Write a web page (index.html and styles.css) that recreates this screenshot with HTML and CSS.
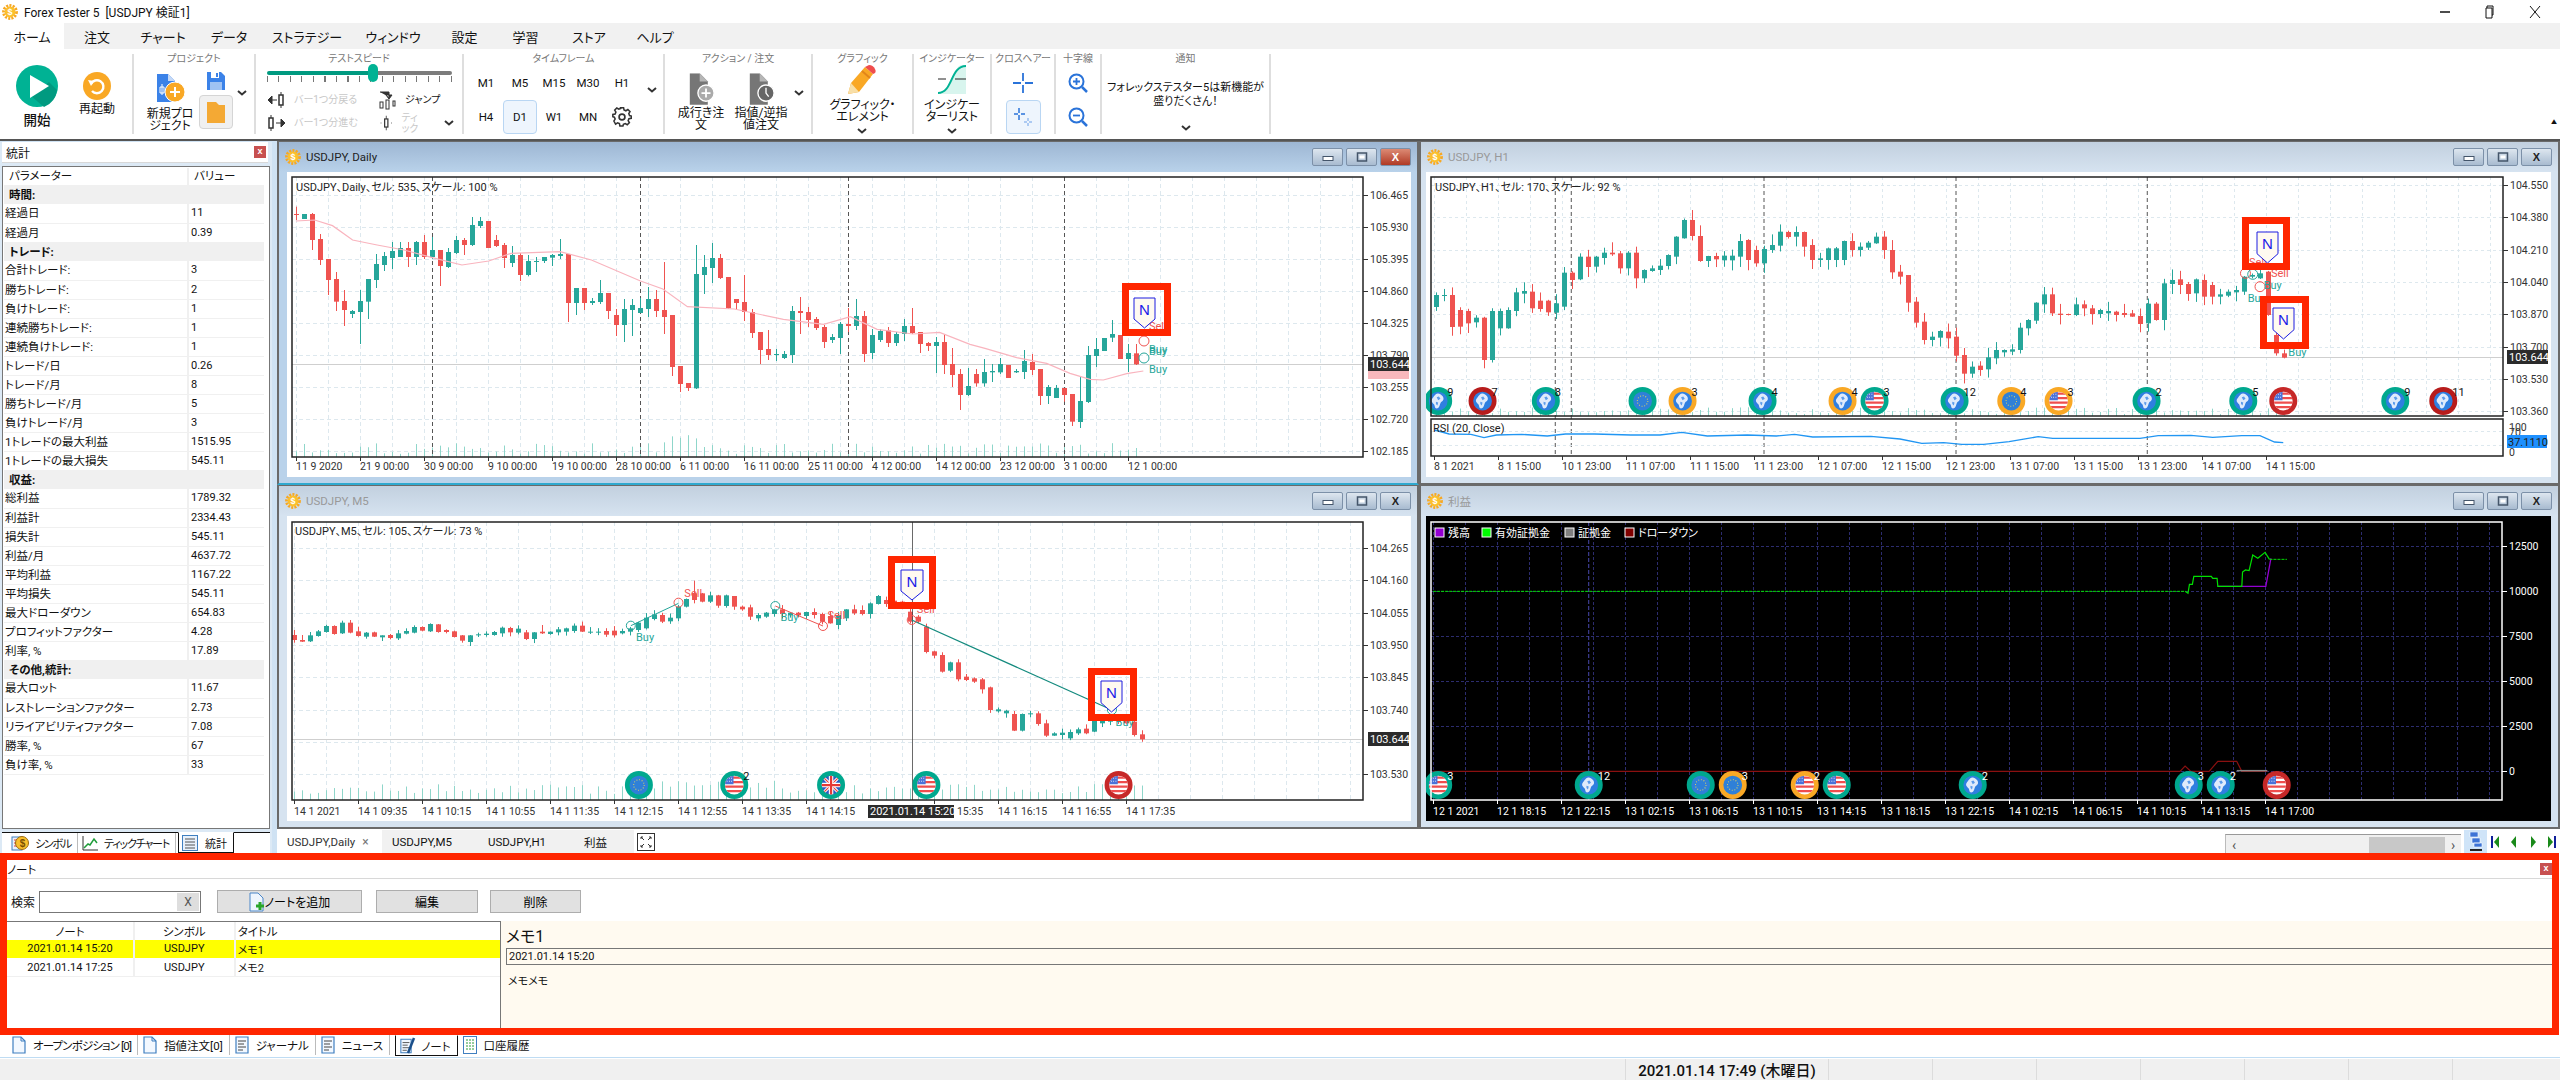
FILE: index.html
```html
<!DOCTYPE html>
<html lang="ja">
  <head>
    <meta charset="UTF-8" />
    <title>Forex Tester 5 [USDJPY 検証1]</title>
    <link rel="stylesheet" href="styles.css">
  </head>
  <body>
    <!-- shared icons -->
    <svg class="svg-defs" aria-hidden="true">
      <defs>
        <clipPath id="flagClip"><circle cx="14" cy="14" r="12.5" /></clipPath>
      </defs>
      <symbol id="sun" viewBox="0 0 16 16">
        <circle cx="8" cy="8" r="6.4" fill="none" stroke="#f7a823" stroke-width="3" stroke-dasharray="2 1.2" />
        <circle cx="8" cy="8" r="5.4" fill="#fbc02d" />
      </symbol>
      <symbol id="chev" viewBox="0 0 10 6">
        <path d="M1 1l4 3.4L9 1" fill="none" stroke="#333" stroke-width="2" />
      </symbol>
      <symbol id="wmin" viewBox="0 0 12 8">
        <rect x="1" y="3.500" width="10" height="4" fill="#fff" stroke="#44556a" />
      </symbol>
      <symbol id="wmax" viewBox="0 0 12 10">
        <rect x="1.500" y="1" width="9" height="8" fill="none" stroke="#44556a" stroke-width="1.500" />
        <rect x="3.500" y="3.500" width="5" height="3" fill="#fff" />
      </symbol>
      <symbol id="page" viewBox="0 0 14 18">
        <path d="M1 1h8l4 4v12H1z" fill="#f2f8ff" stroke="#3f7fc0" stroke-width="1.2" />
        <path d="M9 1v4h4" fill="none" stroke="#3f7fc0" />
      </symbol>
      <symbol id="lines" viewBox="0 0 14 18">
        <path d="M1 1h12v16H1z" fill="#f2f8ff" stroke="#3f7fc0" stroke-width="1.2" />
        <path d="M3 5h8M3 8h6M3 11h8M3 14h5" stroke="#444" />
      </symbol>
      <symbol id="grayDoc" viewBox="0 0 30 36">
        <path d="M2 0h11l9 9v26H2z" fill="#767676" />
        <path d="M13 0l9 9h-9z" fill="#b5b5b5" />
      </symbol>
      <symbol id="flag-usa" viewBox="0 0 28 28">
        <g clip-path="url(#flagClip)">
          <rect width="28" height="28" fill="#fff" />
          <path d="M0 4h28M0 10h28M0 16h28M0 22h28" stroke="#ef4d4d" stroke-width="3" />
          <rect width="13" height="13" fill="#4a72d9" />
          <path d="M4 5h1M7 5h1M10 5h1M4 9h1M7 9h1M10 9h1" stroke="#fff" stroke-width="1.4" />
        </g>
      </symbol>
      <symbol id="flag-eu" viewBox="0 0 28 28">
        <g clip-path="url(#flagClip)">
          <rect width="28" height="28" fill="#2f80d8" />
          <circle cx="14" cy="14" r="7" fill="none" stroke="#e7d55a" stroke-width="1.4" stroke-dasharray="1.2 2.4" />
        </g>
      </symbol>
      <symbol id="flag-uk" viewBox="0 0 28 28">
        <g clip-path="url(#flagClip)">
          <rect width="28" height="28" fill="#2c5cc5" />
          <path d="M0 0l28 28M28 0L0 28" stroke="#fff" stroke-width="4" />
          <path d="M0 0l28 28M28 0L0 28" stroke="#e53935" stroke-width="1.5" />
          <path d="M14 0v28M0 14h28" stroke="#fff" stroke-width="6" />
          <path d="M14 0v28M0 14h28" stroke="#e53935" stroke-width="3" />
        </g>
      </symbol>
      <symbol id="flag-globe" viewBox="0 0 28 28">
        <g clip-path="url(#flagClip)">
          <rect width="28" height="28" fill="#2f7fe0" />
          <path d="M14 4c4 1 8 4 7 8-1 3-3 2-4 5s-2 7-5 7-2-4-4-6-4-4-2-7 5-8 8-7z" fill="#dfeafb" />
          <path d="M12 9l3-1 2 3-3 2zM11 15l3 1-1 4-2-2z" fill="#5c9bea" />
        </g>
      </symbol>
    </svg>

    <div class="app">
      <header class="titlebar">
        <svg class="sun-icon" viewBox="0 0 16 16"><use href="#sun" /><text x="8" y="11.400" text-anchor="middle" class="sun-text">$</text></svg>
        <span class="app-title">Forex Tester 5&nbsp; [USDJPY 検証1]</span>
        <div class="win-controls">
          <svg width="12" height="12" viewBox="0 0 12 12"><path d="M1 6h10" stroke="#111" stroke-width="1.5" /></svg>
          <svg width="12" height="14" viewBox="0 0 12 14"><path d="M3 3V1h6v9H8M2 3h6v10H2z" fill="none" stroke="#111" /></svg>
          <svg width="12" height="14" viewBox="0 0 12 14"><path d="M1 1l10 12M11 1L1 13" stroke="#111" /></svg>
        </div>
      </header>

      <nav class="ribbon-tabs">
        <span class="rtab active">ホーム</span>
        <span class="rtab">注文</span>
        <span class="rtab">チャート</span>
        <span class="rtab">データ</span>
        <span class="rtab">ストラテジー</span>
        <span class="rtab">ウィンドウ</span>
        <span class="rtab">設定</span>
        <span class="rtab">学習</span>
        <span class="rtab">ストア</span>
        <span class="rtab">ヘルプ</span>
      </nav>

      <div class="ribbon">
        <section class="rgroup g-run">
          <div class="big-btn start-btn">
            <svg width="42" height="42" viewBox="0 0 42 42">
              <circle cx="21" cy="21" r="21" fill="#00b294" />
              <path d="M15 31l13 11a21 21 0 0 0 13-17l-8-8z" fill="#009a80" />
              <path d="M14 10l19 11-19 12z" fill="#fff" />
            </svg>
            <span class="start-label">開始</span>
          </div>
          <div class="big-btn restart-btn">
            <svg width="28" height="28" viewBox="0 0 28 28">
              <circle cx="14" cy="14" r="14" fill="#f9a825" />
              <path d="M8 12a6.500 6.500 0 1 1 1 7" fill="none" stroke="#fff" stroke-width="2.400" />
              <path d="M5 8l6 1-3 5z" fill="#fff" />
            </svg>
            <span>再起動</span>
          </div>
        </section>

        <section class="rgroup g-project">
          <h4 class="rtitle">プロジェクト</h4>
          <div class="rbody">
            <div class="big-btn project-btn">
              <svg width="30" height="30" viewBox="0 0 30 30">
                <path d="M2 0h11l7 7v21H2z" fill="#3b82e8" />
                <path d="M13 0l7 7h-7z" fill="#c5d9f7" />
                <path d="M7 10v11M5 13h4v6H5z" stroke="#fff" fill="none" />
                <circle cx="20" cy="18" r="10" fill="#f9a825" stroke="#fff" />
                <path d="M20 13v10M15 18h10" stroke="#fff" stroke-width="2" />
              </svg>
              <span class="two-line">新規プロ<br>ジェクト</span>
            </div>
            <div class="project-side">
              <svg width="18" height="18" viewBox="0 0 18 18">
                <path d="M0 0h14l4 4v14H0z" fill="#3b82e8" />
                <path d="M4 0h8v6H4z" fill="#fff" />
                <path d="M9 1h2v4H9z" fill="#3b82e8" />
                <path d="M3 10h12v8H3z" fill="#9fc2f3" />
              </svg>
              <div class="folder-btn">
                <svg width="18" height="22" viewBox="0 0 18 22"><path d="M0 1h9l3 3h6v18H0z" fill="#f4a934" /></svg>
              </div>
            </div>
            <svg class="chev chev-project"><use href="#chev" /></svg>
          </div>
        </section>

        <section class="rgroup g-speed">
          <h4 class="rtitle">テストスピード</h4>
          <div class="slider">
            <div class="slider-fill"></div>
            <div class="slider-thumb"></div>
            <div class="slider-ticks"></div>
          </div>
          <div class="speed-rows">
            <div class="speed-item muted">
              <svg width="18" height="18" viewBox="0 0 18 18"><path d="M0 9h9M0 9l4-4v8z" stroke="#333" fill="#333" /><path d="M13 1v16" stroke="#333" /><rect x="11" y="4" width="4" height="10" fill="#fff" stroke="#333" stroke-width="1.500" /></svg>
              <span>バー1つ分戻る</span>
            </div>
            <div class="speed-item">
              <svg width="18" height="20" viewBox="0 0 18 20"><path d="M1 2h9v5M7 5l3 4 3-4z" stroke="#333" fill="#333" /><rect x="1" y="12" width="3" height="6" fill="#fff" stroke="#333" /><rect x="7" y="10" width="3" height="9" fill="#fff" stroke="#333" /><rect x="14" y="11" width="2" height="5" fill="#fff" stroke="#333" /></svg>
              <span>ジャンプ</span>
            </div>
            <div class="speed-item muted">
              <svg width="18" height="18" viewBox="0 0 18 18"><path d="M3 1v16" stroke="#333" /><rect x="1" y="4" width="4" height="10" fill="#fff" stroke="#333" stroke-width="1.500" /><path d="M8 9h9M17 9l-4-4v8z" stroke="#333" fill="#333" /></svg>
              <span>バー1つ分進む</span>
            </div>
            <div class="speed-item muted tick-item">
              <svg width="18" height="18" viewBox="0 0 18 18"><path d="M9 0v18" stroke="#333" /><rect x="7" y="4" width="4" height="10" fill="#fff" stroke="#333" stroke-width="1.500" /><path d="M2 9h1M15 9h1" stroke="#333" /></svg>
              <span class="tick-label">ティ<br>ック</span>
              <svg class="chev"><use href="#chev" /></svg>
            </div>
          </div>
        </section>

        <section class="rgroup g-time">
          <h4 class="rtitle">タイムフレーム</h4>
          <div class="rbody">
            <div class="tf-grid">
              <span>M1</span><span>M5</span><span>M15</span><span>M30</span><span>H1</span>
              <span>H4</span><span class="selected">D1</span><span>W1</span><span>MN</span>
              <span>
                <svg width="20" height="20" viewBox="0 0 24 24"><path d="M10 2h4l.6 3 2.400 1 2.600-1.600 2.800 2.800L20.800 9.800l1 2.400 2.200.6v3l-3 .6-1 2.400 1.600 2.600-2.800 2.800-2.600-1.600-2.400 1-.6 2.200h-4l-.6-3-2.400-1-2.600 1.600L1.400 19.400 3 16.800l-1-2.400L0 13.800v-3l3-.6 1-2.400L2.400 5.200 5.200 2.400 7.800 4l2.400-1z" transform="translate(1 -1) scale(.92)" fill="none" stroke="#333" stroke-width="2" /><circle cx="12" cy="12" r="3.500" fill="none" stroke="#333" stroke-width="2" /></svg>
              </span>
            </div>
            <svg class="chev chev-time"><use href="#chev" /></svg>
          </div>
        </section>

        <section class="rgroup g-action">
          <h4 class="rtitle">アクション / 注文</h4>
          <div class="rbody">
            <div class="big-btn order-btn">
              <span class="order-icon">
                <svg width="30" height="36" viewBox="0 0 30 36">
                  <use href="#grayDoc" width="30" height="36" />
                  <circle cx="20" cy="22" r="9" fill="#aaa" stroke="#fff" stroke-width="1.500" />
                  <path d="M20 17v10M15 22h10" stroke="#fff" stroke-width="2" />
                </svg>
              </span>
              <span class="two-line">成行き注<br>文</span>
            </div>
            <div class="big-btn order-btn">
              <span class="order-icon">
                <svg width="30" height="36" viewBox="0 0 30 36">
                  <use href="#grayDoc" width="30" height="36" />
                  <circle cx="20" cy="22" r="9" fill="#666" stroke="#fff" stroke-width="1.500" />
                  <path d="M20 16v6l3 4" stroke="#fff" stroke-width="1.500" fill="none" />
                </svg>
              </span>
              <span class="two-line">指値/逆指<br>値注文</span>
            </div>
            <svg class="chev chev-action"><use href="#chev" /></svg>
          </div>
        </section>

        <section class="rgroup g-graphic">
          <h4 class="rtitle">グラフィック</h4>
          <div class="big-btn wide-btn">
            <svg width="30" height="29" viewBox="0 0 30 29">
              <path d="M18 2l8 7-14 18-11 2 3-11z" fill="#f9a825" />
              <path d="M4 18l8 9-11 2z" fill="#f8dfa8" />
              <path d="M18 2l4-2q4 0 6 4t-2 5z" fill="#ef4d4d" />
              <path d="M15 6l8 7" stroke="#e2851a" stroke-width="2" />
            </svg>
            <span class="two-line">グラフィック・<br>エレメント</span>
            <svg class="chev"><use href="#chev" /></svg>
          </div>
        </section>

        <section class="rgroup g-indicator">
          <h4 class="rtitle">インジケーター</h4>
          <div class="big-btn wide-btn">
            <svg width="28" height="29" viewBox="0 0 28 29">
              <path d="M0 14v15h28V0h-4C14 0 16 29 0 29z" fill="#d8f5ee" />
              <path d="M0 28C15 28 12 1 28 1" fill="none" stroke="#00b294" stroke-width="2" />
              <path d="M0 14h8M17 14h11" stroke="#222" />
            </svg>
            <span class="two-line">インジケー<br>ターリスト</span>
            <svg class="chev"><use href="#chev" /></svg>
          </div>
        </section>

        <section class="rgroup g-cross">
          <h4 class="rtitle">クロスヘアー</h4>
          <div class="icon-stack">
            <span class="icon-cell">
              <svg width="20" height="20" viewBox="0 0 20 20"><path d="M10 0v8M10 12v8M0 10h8M12 10h8" stroke="#2a73d9" stroke-width="1.800" /></svg>
            </span>
            <span class="icon-cell selected">
              <svg width="20" height="20" viewBox="0 0 20 20"><path d="M6 1v5M6 8v5M1 7h4M8 7h4" stroke="#2a73d9" stroke-width="1.500" /><path d="M15 11v3M15 16v3M11 15h3M16 15h3" stroke="#6a9fe8" /></svg>
            </span>
          </div>
        </section>

        <section class="rgroup g-zoom">
          <h4 class="rtitle">十字線</h4>
          <div class="icon-stack">
            <span class="icon-cell">
              <svg width="20" height="20" viewBox="0 0 20 20"><circle cx="8.500" cy="8.500" r="7" fill="none" stroke="#2a73d9" stroke-width="2" /><path d="M14 14l5 5" stroke="#2a73d9" stroke-width="2.500" /><path d="M8.500 5v7M5 8.500h7" stroke="#2a73d9" stroke-width="1.800" /></svg>
            </span>
            <span class="icon-cell">
              <svg width="20" height="20" viewBox="0 0 20 20"><circle cx="8.500" cy="8.500" r="7" fill="none" stroke="#2a73d9" stroke-width="2" /><path d="M14 14l5 5" stroke="#2a73d9" stroke-width="2.500" /><path d="M5 8.500h7" stroke="#2a73d9" stroke-width="1.800" /></svg>
            </span>
          </div>
        </section>

        <section class="rgroup g-notify">
          <h4 class="rtitle">通知</h4>
          <p class="notify-text">フォレックステスター5は新機能が<br>盛りだくさん！</p>
          <svg class="chev"><use href="#chev" /></svg>
        </section>

        <span class="ribbon-collapse">&#9650;</span>
      </div>

      <div class="workspace">
        <aside class="side">
          <div class="side-head">
            <span>統計</span>
            <span class="close-x">x</span>
          </div>
          <div class="stats-frame">
            <table class="stats">
              <colgroup><col class="stats-name"><col></colgroup>
              <thead><tr><th>パラメーター</th><th>バリュー</th></tr></thead>
              <tbody>
                <tr class="sec"><td>時間:</td><td></td></tr>
                <tr><td>経過日</td><td>11</td></tr>
                <tr><td>経過月</td><td>0.39</td></tr>
                <tr class="sec"><td>トレード:</td><td></td></tr>
                <tr><td>合計トレード:</td><td>3</td></tr>
                <tr><td>勝ちトレード:</td><td>2</td></tr>
                <tr><td>負けトレード:</td><td>1</td></tr>
                <tr><td>連続勝ちトレード:</td><td>1</td></tr>
                <tr><td>連続負けトレード:</td><td>1</td></tr>
                <tr><td>トレード/日</td><td>0.26</td></tr>
                <tr><td>トレード/月</td><td>8</td></tr>
                <tr><td>勝ちトレード/月</td><td>5</td></tr>
                <tr><td>負けトレード/月</td><td>3</td></tr>
                <tr><td>1トレードの最大利益</td><td>1515.95</td></tr>
                <tr><td>1トレードの最大損失</td><td>545.11</td></tr>
                <tr class="sec"><td>収益:</td><td></td></tr>
                <tr><td>総利益</td><td>1789.32</td></tr>
                <tr><td>利益計</td><td>2334.43</td></tr>
                <tr><td>損失計</td><td>545.11</td></tr>
                <tr><td>利益/月</td><td>4637.72</td></tr>
                <tr><td>平均利益</td><td>1167.22</td></tr>
                <tr><td>平均損失</td><td>545.11</td></tr>
                <tr><td>最大ドローダウン</td><td>654.83</td></tr>
                <tr><td>プロフィットファクター</td><td>4.28</td></tr>
                <tr><td>利率, %</td><td>17.89</td></tr>
                <tr class="sec"><td>その他,統計:</td><td></td></tr>
                <tr><td>最大ロット</td><td>11.67</td></tr>
                <tr><td>レストレーションファクター</td><td>2.73</td></tr>
                <tr><td>リライアビリティファクター</td><td>7.08</td></tr>
                <tr><td>勝率, %</td><td>67</td></tr>
                <tr><td>負け率, %</td><td>33</td></tr>
              </tbody>
            </table>
          </div>
          <div class="side-tabs">
            <span class="stab">
              <svg width="18" height="17" viewBox="0 0 18 17"><rect x="1" y="2" width="10" height="13" fill="#eaf2fb" stroke="#3f7fc0" /><path d="M3 5h5M3 8h5M3 11h5" stroke="#e53935" /><circle cx="11" cy="8" r="6.500" fill="#f9c02d" stroke="#9a6a10" /><text x="11" y="12" text-anchor="middle" class="dollar">$</text></svg>
              シンボル
            </span>
            <span class="stab">
              <svg width="16" height="16" viewBox="0 0 16 16"><path d="M1 1v14h15" fill="none" stroke="#333" /><path d="M2 13l4-4 2 1 4-6 3 4" fill="none" stroke="#1f9d3a" stroke-width="1.500" /></svg>
              ティックチャート
            </span>
            <span class="stab active">
              <svg width="16" height="16" viewBox="0 0 16 16"><rect x=".5" y=".5" width="15" height="15" fill="#e8f1fb" stroke="#3f7fc0" /><path d="M3 4h10M3 7h10M3 10h10M3 13h10" stroke="#555" /></svg>
              統計
            </span>
          </div>
        </aside>

        <main class="main">
          <div class="mdi">
            <article class="window active">
              <div class="window-title">
                <svg class="sun-icon" viewBox="0 0 16 16"><use href="#sun" /><text x="8" y="11.400" text-anchor="middle" class="sun-text">$</text></svg>
                <span>USDJPY, Daily</span>
                <div class="window-btns">
                  <span class="wbtn"><svg width="12" height="8"><use href="#wmin" /></svg></span>
                  <span class="wbtn"><svg width="12" height="10"><use href="#wmax" /></svg></span>
                  <span class="wbtn wclose">X</span>
                </div>
              </div>
              <div class="window-body"><svg class="chart" id="chartDaily"></svg></div>
            </article>
            <article class="window">
              <div class="window-title">
                <svg class="sun-icon" viewBox="0 0 16 16"><use href="#sun" /><text x="8" y="11.400" text-anchor="middle" class="sun-text">$</text></svg>
                <span>USDJPY, H1</span>
                <div class="window-btns">
                  <span class="wbtn"><svg width="12" height="8"><use href="#wmin" /></svg></span>
                  <span class="wbtn"><svg width="12" height="10"><use href="#wmax" /></svg></span>
                  <span class="wbtn">X</span>
                </div>
              </div>
              <div class="window-body"><svg class="chart" id="chartH1"></svg></div>
            </article>
            <article class="window">
              <div class="window-title">
                <svg class="sun-icon" viewBox="0 0 16 16"><use href="#sun" /><text x="8" y="11.400" text-anchor="middle" class="sun-text">$</text></svg>
                <span>USDJPY, M5</span>
                <div class="window-btns">
                  <span class="wbtn"><svg width="12" height="8"><use href="#wmin" /></svg></span>
                  <span class="wbtn"><svg width="12" height="10"><use href="#wmax" /></svg></span>
                  <span class="wbtn">X</span>
                </div>
              </div>
              <div class="window-body"><svg class="chart" id="chartM5"></svg></div>
            </article>
            <article class="window">
              <div class="window-title">
                <svg class="sun-icon" viewBox="0 0 16 16"><use href="#sun" /><text x="8" y="11.400" text-anchor="middle" class="sun-text">$</text></svg>
                <span>利益</span>
                <div class="window-btns">
                  <span class="wbtn"><svg width="12" height="8"><use href="#wmin" /></svg></span>
                  <span class="wbtn"><svg width="12" height="10"><use href="#wmax" /></svg></span>
                  <span class="wbtn">X</span>
                </div>
              </div>
              <div class="window-body dark"><svg class="chart" id="chartEquity"></svg></div>
            </article>
          </div>

          <div class="doc-tabs">
            <span class="dtab active">USDJPY,Daily <i>×</i></span>
            <span class="dtab">USDJPY,M5</span>
            <span class="dtab">USDJPY,H1</span>
            <span class="dtab dtab-last">利益</span>
            <span class="fullscreen">
              <svg width="18" height="18" viewBox="0 0 18 18"><rect x=".5" y=".5" width="17" height="17" fill="#fff" stroke="#333" /><path d="M4 4l3 3M4 4v2M4 4h2M14 4l-3 3M14 4v2M14 4h-2M4 14l3-3M4 14v-2M4 14h2M14 14l-3-3M14 14v-2M14 14h-2" stroke="#333" /></svg>
            </span>
            <div class="doc-scroll">
              <span class="scroll-arrow">&#8249;</span>
              <span class="scroll-track"><span class="scroll-thumb"></span></span>
              <span class="scroll-arrow">&#8250;</span>
            </div>
            <span class="stack-btn">
              <svg width="14" height="20" viewBox="0 0 14 20"><path d="M1 0h8v5H1zM3 6h8v5H3zM5 11h8v4H5z" fill="#3d74d6" stroke="#fff" stroke-width=".6" /><path d="M1 17h12v2H1z" fill="#222" /></svg>
            </span>
            <span class="nav-arrows">
              <svg width="66" height="14" viewBox="0 0 66 14">
                <path d="M1 1v12" stroke="#10209a" stroke-width="2" /><path d="M8 1L3 7l5 6z" fill="#1a8a1a" />
                <path d="M25 1l-5 6 5 6z" fill="#1a8a1a" />
                <path d="M40 1l5 6-5 6z" fill="#1a8a1a" />
                <path d="M57 1l5 6-5 6z" fill="#1a8a1a" /><path d="M64 1v12" stroke="#10209a" stroke-width="2" />
              </svg>
            </span>
          </div>
        </main>
      </div>

      <section class="note-panel">
        <div class="note-head">
          <span>ノート</span>
          <span class="close-x small">x</span>
        </div>
        <div class="note-tools">
          <label class="search-label">検索</label>
          <div class="search-box"><span class="search-clear">X</span></div>
          <button class="tool-btn add-btn">
            <svg width="16" height="20" viewBox="0 0 16 20"><path d="M1 1h8l5 5v13H1z" fill="#eef5fd" stroke="#4a86c8" /><path d="M11 10v8M7 14h8" stroke="#2aa52a" stroke-width="3" /></svg>
            ノートを追加
          </button>
          <button class="tool-btn edit-btn">編集</button>
          <button class="tool-btn del-btn">削除</button>
        </div>
        <div class="note-body">
          <table class="note-list">
            <colgroup><col class="c1"><col class="c2"><col></colgroup>
            <thead><tr><th>ノート</th><th>シンボル</th><th class="left">タイトル</th></tr></thead>
            <tbody>
              <tr class="picked"><td>2021.01.14 15:20</td><td>USDJPY</td><td class="left">メモ1</td></tr>
              <tr><td>2021.01.14 17:25</td><td>USDJPY</td><td class="left">メモ2</td></tr>
            </tbody>
          </table>
          <div class="note-view">
            <h3 class="note-title">メモ1</h3>
            <div class="note-date">2021.01.14 15:20</div>
            <p class="note-text">メモメモ</p>
          </div>
        </div>
      </section>

      <div class="bottom-tabs">
        <span class="btab tight"><svg width="14" height="18"><use href="#page" /></svg>オープンポジション [0]</span>
        <span class="btab"><svg width="14" height="18"><use href="#page" /></svg>指値注文[0]</span>
        <span class="btab"><svg width="14" height="18"><use href="#lines" /></svg>ジャーナル</span>
        <span class="btab"><svg width="14" height="18"><use href="#lines" /></svg>ニュース</span>
        <span class="btab active"><svg width="16" height="18" viewBox="0 0 16 18"><use href="#lines" width="12" height="18" /><path d="M14 1L8 16" stroke="#1b4f8a" stroke-width="2.500" /></svg>ノート</span>
        <span class="btab last"><svg width="14" height="18" viewBox="0 0 14 18"><rect x=".5" y=".5" width="13" height="17" fill="#fff" stroke="#3f7fc0" /><path d="M3 4h8M3 7h8M3 10h8M3 13h8" stroke="#2a9d3a" stroke-dasharray="2 1" /></svg>口座履歴</span>
      </div>

      <footer class="statusbar">
        <span class="status-date">2021.01.14 17:49 (木曜日)</span>
        <span class="status-cell"></span>
        <span class="status-cell"></span>
        <span class="status-cell"></span>
        <span class="status-cell"></span>
        <span class="status-cell"></span>
        <span class="status-cell"></span>
      </footer>
    </div>

    <script src="chart.js"></script>
  </body>
</html>
```

FILE: styles.css
```css
* {
  box-sizing: border-box;
}

body {
  margin: 0;
  background: #fff;
  color: #111;
  font-family: Roboto, "Noto Sans CJK JP", sans-serif;
  font-size: 12px;
  font-feature-settings: "palt";
}

.svg-defs {
  position: absolute;
  width: 0;
  height: 0;
}

.sun-text {
  font: bold 9px "Liberation Sans", sans-serif;
  fill: #fff;
}

.dollar {
  font: bold 10px "Liberation Sans", sans-serif;
  fill: #7a4f00;
}

.app {
  width: 2560px;
  height: 1080px;
  display: flex;
  flex-direction: column;
  overflow: hidden;
}

/* title bar */
.titlebar {
  height: 23px;
  display: flex;
  align-items: center;
  padding-left: 2px;
  flex: none;
}

.sun-icon {
  width: 16px;
  height: 16px;
  flex: none;
}

.app-title {
  margin-left: 6px;
  font-size: 12px;
}

.win-controls {
  margin-left: auto;
  display: flex;
  align-items: center;
  gap: 33px;
  padding-right: 19px;
}

/* ribbon */
.ribbon-tabs {
  height: 26px;
  flex: none;
  background: #f1f1f1;
  display: flex;
  align-items: center;
  font-size: 13px;
}

.rtab {
  height: 100%;
  display: flex;
  align-items: center;
  justify-content: center;
  width: 66px;
}

.rtab.active {
  background: #fff;
  width: 64px;
}

.rtab:nth-child(5) {
  width: 90px;
}

.rtab:nth-child(6) {
  width: 82px;
}

.rtab:nth-child(7),
.rtab:nth-child(8) {
  width: 61px;
}

.ribbon {
  height: 92px;
  flex: none;
  display: flex;
  padding-top: 5px;
  border-bottom: 2px solid #555;
  position: relative;
  font-size: 12px;
  line-height: 12px;
}

.rgroup {
  height: 80px;
  border-right: 2px solid #dedede;
  display: flex;
  flex-direction: column;
  align-items: center;
  flex: none;
}

.rtitle {
  margin: 0;
  height: 14px;
  font-size: 10px;
  line-height: 10px;
  font-weight: 400;
  color: #777;
  text-align: center;
  width: 100%;
  white-space: nowrap;
}

.rbody {
  display: flex;
  width: 100%;
  flex: 1;
}

.big-btn {
  display: flex;
  flex-direction: column;
  align-items: center;
}

.two-line {
  display: block;
  text-align: center;
  line-height: 12px;
  white-space: nowrap;
}

.chev {
  width: 10px;
  height: 6px;
  flex: none;
}

.g-run {
  width: 134px;
  flex-direction: row;
  align-items: flex-start;
}

.start-btn {
  margin: 11px 0 0 16px;
  width: 42px;
}

.start-label {
  margin-top: 7px;
  font-size: 13.5px;
  font-weight: 500;
}

.restart-btn {
  margin: 18px 0 0 21px;
  width: 36px;
}

.restart-btn span {
  margin-top: 3px;
  white-space: nowrap;
}

.g-project {
  width: 122px;
}

.project-btn {
  width: 46px;
  margin: 6px 0 0 13px;
}

.project-btn span {
  margin-top: 4px;
}

.project-side {
  margin: 4px 0 0 6px;
  display: flex;
  flex-direction: column;
  align-items: center;
  gap: 5px;
  width: 34px;
}

.folder-btn {
  width: 34px;
  height: 34px;
  background: #f0f0f0;
  border: 1px solid #d5d5d5;
  border-radius: 4px;
  display: flex;
  align-items: center;
  justify-content: center;
}

.chev-project {
  margin: 22px 0 0 4px;
}

.g-speed {
  width: 208px;
  align-items: flex-start;
}

.g-speed .rtitle {
  margin-bottom: 1px;
}

.slider {
  width: 185px;
  margin-left: 11px;
  height: 12px;
  position: relative;
}

.slider-fill {
  height: 4px;
  margin-top: 3px;
  background: linear-gradient(90deg, #009a80 0 57%, #7c7c7c 57% 100%);
  border-radius: 2px;
}

.slider-thumb {
  position: absolute;
  left: 101px;
  top: -4px;
  width: 10px;
  height: 18px;
  border-radius: 5px;
  background: #00b294;
}

.slider-ticks {
  height: 6px;
  margin-top: 1px;
  background: repeating-linear-gradient(90deg, #777 0 1px, transparent 1px 11.5px);
}

.speed-rows {
  margin: 8px 0 0 12px;
  display: grid;
  grid-template-columns: 111px 75px;
  grid-auto-rows: 23px;
  align-items: center;
  font-size: 10px;
}

.speed-item {
  display: flex;
  align-items: center;
  gap: 8px;
}

.speed-item.muted {
  color: #c8c8c8;
}

.tick-label {
  line-height: 11px;
  width: 34px;
}

.tick-item .chev {
  margin-left: 7px;
}

.g-time {
  width: 201px;
}

.tf-grid {
  margin: 2px 0 0 5px;
  display: grid;
  grid-template-columns: repeat(5, 34px);
  grid-auto-rows: 34px;
  font-size: 11.5px;
}

.tf-grid span {
  display: flex;
  align-items: center;
  justify-content: center;
}

.selected {
  background: #eef5fd;
  border: 1px solid #b9d6f3;
  border-radius: 4px;
}

.chev-time {
  margin: 23px 0 0 8px;
}

.g-action {
  width: 148px;
}

.order-btn {
  width: 60px;
  margin-top: 5px;
}

.order-btn:first-child {
  margin-left: 6px;
}

.order-icon {
  height: 33px;
}

.order-icon svg {
  width: 27px;
  height: 33px;
}

.order-btn .two-line {
  margin-top: 1px;
}

.chev-action {
  margin: 22px 0 0 3px;
}

.g-graphic,
.g-indicator {
  width: 101px;
}

.g-indicator {
  width: 78px;
}

.wide-btn {
  margin-top: 1px;
}

.wide-btn .two-line {
  margin: 5px 0 5px;
}

.g-cross {
  width: 64px;
}

.g-zoom {
  width: 46px;
}

.icon-stack {
  display: flex;
  flex-direction: column;
  margin-top: 2px;
}

.icon-cell {
  width: 35px;
  height: 34px;
  display: flex;
  align-items: center;
  justify-content: center;
}

.g-notify {
  width: 169px;
}

.notify-text {
  margin: 13px 0 16px;
  font-size: 11px;
  line-height: 14px;
  text-align: center;
  white-space: nowrap;
}

.ribbon-collapse {
  position: absolute;
  right: 3px;
  bottom: 11px;
  font-size: 6px;
}

/* middle area */
.workspace {
  height: 712px;
  flex: none;
  display: flex;
  background: #cfe2f3;
}

.side {
  width: 272px;
  flex: none;
  display: flex;
  flex-direction: column;
  padding: 0 2px 0 2px;
  border-top: 1px solid #cfe2f3;
  background: #dce9f5;
}

.side-head {
  height: 21px;
  background: #fff;
  border-bottom: 1px solid #d8d8d8;
  display: flex;
  align-items: center;
  justify-content: space-between;
  padding: 0 2px 0 4px;
  font-size: 12px;
  margin-right: 2px;
}

.close-x {
  width: 12px;
  height: 12px;
  background: #c75050;
  color: #fff;
  font: bold 9px/11px "Liberation Sans", sans-serif;
  text-align: center;
}

.stats-frame {
  margin-top: 3px;
  height: 663px;
  flex: none;
  background: #fff;
  border: 1.5px solid #777;
  padding: 1px 5px 0 1px;
}

.stats {
  width: 100%;
  table-layout: fixed;
  border-collapse: collapse;
}

.stats-name {
  width: 184px;
}

.stats th {
  height: 17px;
  padding: 0 0 0 5px;
  font-weight: 400;
  font-size: 11.5px;
  line-height: 17px;
  text-align: left;
  border-left: 2px solid #f0f0f0;
}

.stats th:first-child {
  border-left: 0;
}

.stats td {
  height: 19px;
  padding: 0;
  border-bottom: 1.5px solid #f0f0f0;
  font-size: 11.5px;
  line-height: 16px;
  white-space: nowrap;
}

.stats td:first-child {
  padding-left: 1px;
  border-right: 2px solid #f0f0f0;
}

.stats td:last-child {
  padding-left: 2px;
  font-size: 11px;
}

.stats .sec td {
  background: #f0f0f0;
  border: 0;
  font-weight: 700;
}

.stats .sec td:first-child {
  padding-left: 5px;
}

.side-tabs {
  margin-top: 3px;
  height: 21px;
  display: flex;
  background: #fff;
  border-top: 1px solid #111;
  font-size: 11px;
  padding-left: 9px;
}

.stab {
  display: flex;
  align-items: center;
  gap: 6px;
  padding-right: 6px;
  margin-right: 4px;
  border-right: 1px solid #bbb;
  white-space: nowrap;
  letter-spacing: -1.2px;
}

.stab.active {
  margin: -1px 0 0 -2px;
  padding: 0 6px 0 3px;
  border: 1px solid #111;
  border-top-color: #fff;
  gap: 7px;
  letter-spacing: 0;
}

.side::after {
  content: "";
  display: block;
  flex: 1;
  background: #fff;
}

.main {
  flex: 1;
  min-width: 0;
  margin-left: 5px;
  display: flex;
  flex-direction: column;
  background: #fff;
}

.mdi {
  height: 688px;
  flex: none;
  display: grid;
  grid-template-columns: 1142px 1fr;
  grid-template-rows: 344px 344px;
}

.window {
  border: 2px solid #6a6a6a;
  border-top-width: 1px;
  display: flex;
  flex-direction: column;
  background: #d6e3f0;
}

.window-title {
  height: 30px;
  flex: none;
  display: flex;
  align-items: center;
  padding: 0 6px;
  gap: 5px;
  font-size: 11.5px;
  color: #999;
  background: linear-gradient(#c2d0df, #d6e3f0);
}

.window.active .window-title {
  color: #222;
  background: linear-gradient(#9db6d3, #b9d2ea);
}

.window-btns {
  margin-left: auto;
  display: flex;
  gap: 3px;
}

.wbtn {
  width: 31px;
  height: 18px;
  border: 1px solid #7c90a8;
  border-radius: 2px;
  background: linear-gradient(#dde6ef, #a8bbd0);
  color: #222;
  font: bold 11px/16px "Liberation Sans", sans-serif;
  display: flex;
  align-items: center;
  justify-content: center;
}

.wclose {
  background: linear-gradient(#dc8a74, #b03a25);
  color: #fff;
}

.window-body {
  flex: 1;
  margin: 0 6px 6px 8px;
  background: #fff;
  min-height: 0;
}

.window:nth-child(even) .window-body {
  margin: 0 7px 6px 5px;
}

.window.active {
  background: #b9d2ea;
  border-bottom-color: #2fa9cf;
}

.window-body.dark {
  background: #000;
}

.chart {
  display: block;
  width: 100%;
  height: 100%;
}

/* chart text */
.chart text {
  font-family: Roboto, "Noto Sans CJK JP", sans-serif;
  font-feature-settings: "palt";
  font-size: 10.5px;
  fill: #333;
}

.chart .info {
  font-size: 11px;
  fill: #222;
}

.chart .tag {
  fill: #fff;
  font-size: 11px;
}

.chart .buy {
  fill: #26a69a;
  font-size: 11px;
}

.chart .sell {
  fill: #ef5350;
  font-size: 11px;
}

.chart .flag-num {
  fill: #111;
  font-size: 11px;
}

.chart .note-n {
  fill: #2020e8;
  font: 400 15px "Liberation Sans", sans-serif;
}

.chart.on-black text {
  fill: #fff;
}

/* document tabs */
.doc-tabs {
  height: 24px;
  flex: none;
  display: flex;
  align-items: stretch;
  font-size: 11.5px;
  margin-top: 1px;
}

.dtab {
  width: 96px;
  padding-left: 10px;
  display: flex;
  align-items: center;
  background: #f1f1f1;
  white-space: nowrap;
}

.dtab-last {
  width: 60px;
}

.dtab.active {
  width: 105px;
  background: #fff;
  color: #333;
  gap: 7px;
}

.dtab i {
  font-style: normal;
  color: #777;
  font-size: 12px;
}

.fullscreen {
  margin-left: 3px;
  display: flex;
  align-items: center;
}

.doc-scroll {
  margin: 4px 0 0 auto;
  width: 236px;
  height: 20px;
  background: #f0f0f0;
  border-top: 1px solid #999;
  border-left: 1px solid #bbb;
  display: flex;
  align-items: center;
}

.scroll-arrow {
  width: 16px;
  text-align: center;
  font-size: 14px;
  line-height: 14px;
  color: #555;
}

.scroll-track {
  flex: 1;
  height: 16px;
  display: flex;
  justify-content: flex-end;
}

.scroll-thumb {
  width: 76px;
  background: #c8c8c8;
}

.stack-btn {
  margin-left: 3px;
  width: 23px;
  background: #cfe4f8;
  display: flex;
  align-items: center;
  justify-content: center;
}

.nav-arrows {
  display: flex;
  align-items: center;
  padding: 0 3px 0 4px;
}

/* notes */
.note-panel {
  height: 182px;
  flex: none;
  border: 7px solid #ff2600;
  display: flex;
  flex-direction: column;
  margin-right: 1px;
  background: #fff;
}

.note-head {
  height: 19px;
  flex: none;
  display: flex;
  align-items: center;
  justify-content: space-between;
  border-bottom: 1px solid #d8d8d8;
  font-size: 11.5px;
}

.close-x.small {
  width: 12px;
  height: 12px;
}

.note-tools {
  height: 42px;
  flex: none;
  display: flex;
  align-items: center;
  font-size: 12px;
  padding-top: 3px;
}

.search-label {
  margin-left: 4px;
  width: 28px;
}

.search-box {
  width: 162px;
  height: 22px;
  border: 1px solid #777;
  display: flex;
  justify-content: flex-end;
  align-items: center;
  padding-right: 1px;
}

.search-clear {
  width: 22px;
  height: 18px;
  background: #dedede;
  color: #555;
  text-align: center;
  line-height: 18px;
}

.tool-btn {
  height: 23px;
  background: #e1e1e1;
  border: 1px solid #adadad;
  font: inherit;
  padding: 0;
  display: flex;
  align-items: center;
  justify-content: center;
}

.add-btn {
  margin-left: 16px;
  width: 145px;
}

.edit-btn {
  margin-left: 14px;
  width: 102px;
}

.del-btn {
  margin-left: 12px;
  width: 91px;
}

.note-body {
  flex: 1;
  min-height: 0;
  display: flex;
}

.note-list {
  width: 494px;
  height: 100%;
  flex: none;
  table-layout: fixed;
  border-collapse: collapse;
  display: block;
  border-top: 1px solid #777;
  border-right: 1px solid #777;
  font-size: 11px;
}

.note-list .c1 {
  width: 127px;
}

.note-list .c2 {
  width: 101px;
}

.note-list th {
  height: 18px;
  font-weight: 400;
  font-size: 11.5px;
  padding: 0;
  border-right: 2px solid #f0f0f0;
}

.note-list td {
  height: 18px;
  padding: 0;
  text-align: center;
  border-right: 2px solid #f0f0f0;
  border-bottom: 1.5px solid #f0f0f0;
}

.note-list .left {
  text-align: left;
  padding-left: 2px;
  width: 266px;
  border-right: 0;
}

.note-list .picked td {
  background: #ff0;
  border-bottom-color: #fff;
}

.note-view {
  flex: 1;
  background: #fffaf0;
  padding: 5px 0 0 5px;
  min-width: 0;
}

.note-title {
  margin: 0;
  height: 22px;
  font-size: 16px;
  line-height: 22px;
  font-weight: 400;
}

.note-date {
  height: 17px;
  border: 1px solid #777;
  border-right: 0;
  font-size: 11px;
  line-height: 15px;
  padding-left: 2px;
}

.note-text {
  margin: 7px 0 0 2px;
  font-size: 11px;
}

/* bottom tabs and status */
.bottom-tabs {
  height: 23px;
  flex: none;
  display: flex;
  align-items: stretch;
  padding-left: 12px;
  border-bottom: 1px solid #bfdcf3;
  font-size: 11.5px;
}

.btab {
  display: flex;
  align-items: center;
  gap: 7px;
  padding-right: 6px;
  margin-right: 5px;
  height: 20px;
  border-right: 1px solid #bbb;
  white-space: nowrap;
}

.btab.tight {
  letter-spacing: -.85px;
}

.btab.active {
  margin: 0 5px 0 0;
  padding: 0 6px 0 4px;
  border: 1px solid #111;
  border-top-color: #fff;
  height: 21px;
  gap: 5px;
}

.btab.last {
  border-right: 0;
}

.statusbar {
  flex: 1;
  margin-top: 1px;
  background: #f0f0f0;
  display: flex;
  padding-left: 1625px;
  font-size: 15px;
}

.status-date {
  width: 204px;
  display: flex;
  align-items: center;
  justify-content: center;
  font-weight: 500;
  border-left: 1px solid #dcdcdc;
  border-right: 1px solid #dcdcdc;
  white-space: nowrap;
}

.status-cell {
  border-right: 1px solid #dcdcdc;
  width: 104px;
}

.status-cell:first-of-type {
  width: 125px;
}
```

FILE: chart.js
```js
// candle data is read in zoomed picture coordinates: x = ox + X / sx, y = oy + Y / 3
function rng(seed) {
  let s = seed;
  return () => {
    s = (s * 1664525 + 1013904223) % 4294967296;
    return s / 4294967296;
  };
}

function parseCandles(str) {
  return str.trim().split(/\s+/).map((item) => {
    const nums = item.slice(1).split(",").map(Number);
    return { up: item[0] === "g", top: nums[0], bot: nums[1], hi: nums[2], lo: nums[3] };
  });
}

const DAILY = `
r237,240,215,255 g237,252 r237,315,234,345 r312,375,297,390 r372,435,372,480 r432,500,411,528 r498,525,465,573 g528,537,525,549
g498,531,465,627 g432,500,432,552 g387,435,357,459 g363,390,351,408 g348,369,321,402 g339,366,321,366 r339,366,321,396 g321,366,318,390
r321,366,300,372 g345,366,306,372 r345,393,345,453 g351,396,339,399 g315,354,303,357 r315,330,309,360 g270,330,246,333 g258,273,246,279
r258,339 r315,333,300,336 r330,369,324,399 g360,384,333,396 r360,420,354,438 g378,420,360,424 g378,381,366,411 g366,378,366,384
g360,368,357,393 g357,363,312,372 r357,504,357,561 g459,504,459,540 r459,504,459,525 g498,504,489,510 g474,501,435,507 r474,528,474,552
r540,570,522,603 g522,570,492,621 g510,525,492,603 g519,534,489,534 g492,522,456,546 r492,528,465,546 r525,546,381,597 r540,696,540,723
r693,747,693,771 r744,759,744,768 g417,760,330,762 g396,420,360,477 g369,399,324,444 r369,429,357,432 r426,520,426,522 r492,504,492,525
r501,531,420,558 r531,594,522,609 r591,645,591,687 r642,660,585,675 g657,660,642,678 g657,669,648,672 g528,660,513,684 r528,534,486,597
r531,555,516,576 r552,579,546,585 r576,621,570,639 g606,615,597,624 g567,609,561,657 r567,573,519,591 g543,573,492,585 r543,657,528,681
g600,654,582,672 g588,615,582,621 r586,624,576,636 g597,624,591,633 g573,597,552,618 r573,594,519,597 r591,627,591,654 r624,633,621,648
g621,633,606,714 r621,690,597,717 r687,720,639,756 r717,780,702,825 g753,780,699,783 r717,745,702,755 g711,745,672,755 g708,712,687,741
g687,712,669,717 r690,729,690,729 g708,712,702,714 g678,711,645,732 r681,705,657,720 r702,783,702,810 g756,783,750,807 g759,789,750,789
r759,780,759,800 r777,860,777,873 g798,861,726,879 g660,801,633,804 g642,663,609,696 g609,648,609,648 g597,608,555,621 r600,672,600,672
g654,672,627,711 r655,688,627,690`;

const H1 = `
g480,516 g480,482 r480,576 r525,575 r528,565 g548,562 r548,675 g528,675 g528,580 g525,580 g472,528 g468,476 r470,520 r497,522 r497,532
g505,533 g413,515 r413,435 g365,433 r365,396 g365,395 g353,369 r353,358 r355,400 g353,400 r353,430 g405,430 g400,408 g392,405 g360,393
g305,365 g255,310 r255,303 r303,378 g363,378 r363,373 g362,376 g362,376 g318,365 r315,375 r345,385 g342,385 g330,345 g290,332 r291,306
g291,305 r291,335 r330,375 g370,375 g340,375 g340,375 g318,375 r318,345 g335,345 g323,338 g305,325 r305,345 r345,412 r410,425 r420,503
r500,563 r560,615 g605,615 g588,608 r590,610 r605,662 r660,716 g695,716 r692,705 g667,703 g645,670 g645,652 g643,650 g578,645 g555,580
g503,557 g478,508 r478,535 r536,540 r537,540 g508,540 r508,520 r520,537 g525,537 g528,535 r530,540 r534,540 r535,545 r543,567 g506,565
r506,555 g445,555 g435,447 r433,450 r447,477 g433,475 r435,485 r450,485 g478,485 g470,482 g465,472 g425,470 g420,425 g415,430 r410,540
r600,655 r655,668`;

const M5 = `
r435,450,420,458 r450,455,435,456 g436,454,426,456 g424,438,420,440 g408,426,404,428 r408,432,406,434 g398,430,392,432 r398,428,390,430
r424,438,410,440 g428,440,426,446 r427,440,425,441 g436,442,436,453 r435,444,432,448 g430,445,420,450 g423,431,415,433 g411,428,406,430
r411,422,409,424 g402,424,400,426 r403,426,402,428 r420,426,418,430 r424,441,422,442 r436,452,435,458 g436,456,435,468 g433,436,428,441
g431,435,424,440 g426,435,423,437
g413,430 r414,427 g416,428 r427,447 g427,447 r425,430,405,432 g425,432 g418,427 g415,425 g407,423 r407,425 g425,427 g425,427 r423,434
r422,436 g423,430 g415,425 g398,420 g383,415 g373,387 r375,395 g383,394 g350,385 g327,350 r310,330,272,340 r310,335 g316,335 r316,347
g316,348 r318,350 r350,358 r352,380 g375,385 g368,380 g358,372 r358,372 g368,376 r368,376 g366,378 r366,375 r372,395 r378,400 g375,405
g358,385 r358,370 r360,372 g340,372 g318,342 r330,342 r332,345 r335,345 r365,395 r380,395 r410,486 r484,497 r495,545 g517,542 r517,568
r560,570 r565,575 r568,598 r592,660 g658,664 g662,670 r672,722 g672,722 g670,673 r670,702 r700,737 g730,737 g728,735 g726,745 g718,730
r716,730 g690,725 g690,700 g688,695 r690,695 r690,700 r695,735 r733,748`;

function line(x1, y1, x2, y2, attrs) {
  return `<line x1="${x1}" y1="${y1}" x2="${x2}" y2="${y2}" ${attrs}/>`;
}

function text(x, y, str, cls, extra) {
  return `<text x="${x}" y="${y}" class="${cls || ""}" ${extra || ""}>${str}</text>`;
}

function poly(points, color, width, extra) {
  return `<polyline points="${points.map((p) => p.join(",")).join(" ")}" fill="none" stroke="${color}" stroke-width="${width || 1}" ${extra || ""}/>`;
}

function flag(x, y, kind, ring, num, numCls) {
  let s = `<circle cx="${x}" cy="${y}" r="14" fill="${ring}"/>`;
  s += `<use href="#flag-${kind}" x="${x - 10.5}" y="${y - 10.5}" width="21" height="21"/>`;
  if (num) s += text(x + 9, y - 5, num, numCls || "flag-num");
  return s;
}

function noteMark(box, pent) {
  const [bx, by, bw, bh] = box;
  const [px, py, pw, ph] = pent;
  let s = "";
  s += `<path d="M${px} ${py}h${pw}v${ph * 0.7}L${px + pw / 2} ${py + ph}L${px} ${py + ph * 0.7}z" fill="#fffaf0" stroke="#1c1ce0"/>`;
  s += text(px + pw / 2, py + ph * 0.55, "N", "note-n", 'text-anchor="middle"');
  s += `<rect x="${bx + 3.5}" y="${by + 3.5}" width="${bw - 7}" height="${bh - 7}" fill="none" stroke="#ff2600" stroke-width="7"/>`;
  return s;
}

function setupSvg(id) {
  const svg = document.getElementById(id);
  const r = svg.getBoundingClientRect();
  svg.setAttribute("viewBox", `${r.left} ${r.top} ${r.width} ${r.height}`);
  return svg;
}

function candles(list, cfg) {
  const rand = rng(cfg.seed);
  let s = "";
  list.forEach((c, i) => {
    const color = c.up ? "#26a69a" : "#ef5350";
    const x = Math.round(cfg.start + cfg.pitch * i);
    let hi = c.hi;
    let lo = c.lo;
    if (hi === undefined) hi = c.top - (cfg.auto ? rand() * cfg.auto : 0);
    if (lo === undefined) lo = c.bot + (cfg.auto ? rand() * cfg.auto : 0);
    const top = cfg.oy + c.top / 3;
    const h = Math.max((c.bot - c.top) / 3, 1);
    s += `<rect x="${x}" y="${cfg.oy + hi / 3}" width="1" height="${(lo - hi) / 3}" fill="${color}"/>`;
    s += `<rect x="${x - 2}" y="${top}" width="5" height="${h}" fill="${color}"/>`;
  });
  return s;
}

function volumes(count, cfg) {
  const rand = rng(cfg.seed + 7);
  let s = "";
  for (let i = 0; i < count; i++) {
    const x = Math.round(cfg.start + cfg.pitch * i);
    let h = cfg.vmin + rand() * (cfg.vmax - cfg.vmin);
    if (cfg.spike && i >= cfg.spike[0] && i <= cfg.spike[1]) h += cfg.spike[2];
    s += `<rect x="${x}" y="${cfg.bottom - h}" width="1" height="${h}" fill="#8fd6ca"/>`;
  }
  return s;
}

function grid(plot, ys, vx, color, dash) {
  let s = "";
  ys.forEach((y) => {
    s += line(plot.x1, y + 0.5, plot.x2, y + 0.5, `stroke="${color}" stroke-dasharray="${dash}"`);
  });
  for (let x = vx; x < plot.x2; x += 32) {
    s += line(x + 0.5, plot.y1, x + 0.5, plot.y2, `stroke="${color}" stroke-dasharray="${dash}"`);
  }
  return s;
}

function axis(plot, ys, labels, tickX0, timeLabels, timeY, cls) {
  let s = "";
  const tickColor = cls === "white" ? "#fff" : "#333";
  ys.forEach((y, i) => {
    s += line(plot.x2, y + 0.5, plot.x2 + 5, y + 0.5, `stroke="${tickColor}"`);
    s += text(plot.x2 + 7, y + 4, labels[i]);
  });
  timeLabels.forEach((label, i) => {
    if (label === null) return;
    const x = tickX0 + 64 * i;
    s += line(x + 0.5, plot.y2, x + 0.5, plot.y2 + 4, `stroke="${tickColor}"`);
    s += text(x, timeY, label);
  });
  return s;
}

function frame(x1, y1, x2, y2, color) {
  return `<rect x="${x1}" y="${y1}" width="${x2 - x1}" height="${y2 - y1}" fill="none" stroke="${color || "#222"}" stroke-width="1.500"/>`;
}

function priceTag(x, y, label, w) {
  return `<rect x="${x}" y="${y - 7}" width="${w}" height="14" fill="#2b2b2b"/>` + text(x + 2, y + 4, label, "tag");
}

function drawDaily() {
  const svg = setupSvg("chartDaily");
  const plot = { x1: 292, y1: 177, x2: 1363, y2: 457 };
  const ys = [195, 227, 259, 291, 323, 355, 387, 419, 451];
  const X6 = (x) => 270 + x / 2.24;
  const X7 = (x) => 960 + x / 3;
  const Y = (y) => 135 + y / 3;
  const cfg = { start: 296, pitch: 8, oy: 135, seed: 11, bottom: 457, vmin: 3, vmax: 14, spike: [46, 50, 9] };
  const list = parseCandles(DAILY);

  let s = grid(plot, ys, 296, "#dde8ee", "4 3");
  s += line(plot.x1, 364.5, plot.x2, 364.5, 'stroke="#cfcfcf"');
  s += volumes(list.length, cfg);
  [432, 640, 848, 1064].forEach((x) => {
    s += line(x + 0.5, plot.y1, x + 0.5, plot.y2, 'stroke="#555" stroke-dasharray="4 3"');
  });
  const ma = [[58,258],[100,255],[140,272],[185,315],[240,330],[300,345],[370,370],[430,390],[490,378],[540,355],[650,350],[720,375],[830,438],[880,462],[935,515],[1040,522],[1150,553],[1240,568],[1300,545],[1360,583],[1440,597],[1500,592],[1568,628]]
    .map((p) => [X6(p[0]), Y(p[1])]);
  const ma2 = [[75,640],[170,668],[260,685],[330,715],[390,733],[430,735],[500,716],[550,708]].map((p) => [X7(p[0]), Y(p[1])]);
  s += candles(list, cfg);
  s += poly(ma.concat(ma2), "#f9b4be", 1.2);

  // trades near the right edge
  s += text(1149, 330, "Sell", "sell");
  s += `<circle cx="1144" cy="341" r="5" fill="none" stroke="#ef5350"/><circle cx="1144" cy="358" r="5" fill="none" stroke="#26a69a"/>`;
  s += text(1149, 353, "Buy", "buy") + text(1149, 355, "Buy", "buy") + text(1149, 373, "Buy", "buy");
  s += noteMark([1122, 283, 49, 53], [1134, 298, 21, 30]);

  s += frame(plot.x1, plot.y1, plot.x2, plot.y2);
  s += text(296, 191, "USDJPY、Daily、セル: 535、スケール: 100 %", "info");
  s += axis(plot, ys, ["106.465", "105.930", "105.395", "104.860", "104.325", "103.790", "103.255", "102.720", "102.185"], 296,
    ["11 9 2020", "21 9 00:00", "30 9 00:00", "9 10 00:00", "19 10 00:00", "28 10 00:00", "6 11 00:00", "16 11 00:00", "25 11 00:00", "4 12 00:00", "14 12 00:00", "23 12 00:00", "3 1 00:00", "12 1 00:00"], 470);
  s += `<rect x="1368" y="371" width="41" height="8" fill="#f8b8bc"/>`;
  s += priceTag(1368, 364, "103.644", 41);
  svg.innerHTML = s;
}

function drawH1() {
  const svg = setupSvg("chartH1");
  const plot = { x1: 1431, y1: 177, x2: 2503, y2: 416 };
  const rsiPane = { x1: 1431, y1: 419, x2: 2503, y2: 456 };
  const X = (x) => 1420 + x / 1.375;
  const Y = (y) => 135 + y / 3;
  const ys = [185, 217, 250, 282, 314, 347, 379, 411];
  const cfg = { start: X(22), pitch: 8, oy: 135, seed: 23, auto: 32, bottom: 416, vmin: 2, vmax: 9 };
  const list = parseCandles(H1);

  let s = grid(plot, ys, 1434, "#dde8ee", "3 3");
  s += line(plot.x1, 357.5, plot.x2, 357.5, 'stroke="#cfcfcf"');
  s += volumes(list.length, cfg);
  [186, 208, 473, 737, 1000].forEach((x) => {
    s += line(X(x), plot.y1, X(x), rsiPane.y2, 'stroke="#555" stroke-dasharray="4 3"');
  });
  s += candles(list, cfg);

  [[25, "globe", "#00a88e", "9"], [86, "globe", "#b71c1c", "7"], [173, "globe", "#00a88e", "8"], [306, "eu", "#00a88e"],
   [361, "globe", "#f9a825", "3"], [471, "globe", "#00a88e", "4"], [581, "globe", "#f9a825", "4"], [625, "usa", "#00a88e", "3"],
   [735, "globe", "#00a88e", "12"], [813, "eu", "#f9a825", "4"], [878, "usa", "#f9a825", "3"], [999, "globe", "#00a88e", "2"],
   [1132, "globe", "#00a88e", "5"], [1187, "usa", "#c62828"], [1341, "globe", "#00a88e", "9"], [1407, "globe", "#b71c1c", "11"]]
    .forEach((f) => {
      s += flag(X(f[0]), 401, f[1], f[2], f[3]);
    });

  // trades
  s += `<circle cx="${X(1135)}" cy="${Y(415)}" r="5" fill="none" stroke="#ef5350"/><circle cx="${X(1145)}" cy="${Y(418)}" r="5" fill="none" stroke="#26a69a"/><circle cx="${X(1155)}" cy="${Y(455)}" r="5" fill="none" stroke="#ef5350"/>`;
  s += text(X(1140), Y(392), "Sell", "sell") + text(X(1170), Y(425), "Sell", "sell");
  s += text(X(1160), Y(462), "Buy", "buy") + text(X(1138), Y(500), "Buy", "buy") + text(X(1194), Y(662), "Buy", "buy");
  s += noteMark([2242, 217, 48, 53], [2257, 232, 21, 31]);
  s += noteMark([2260, 296, 49, 53], [2273, 308, 21, 31]);

  // RSI pane
  const rsi = [[20,885],[40,897],[70,898],[88,908],[105,900],[140,898],[175,903],[200,897],[240,897],[290,900],[330,900],[360,892],[395,903],[450,900],[490,903],[515,898],[540,906],[620,904],[660,912],[690,925],[720,923],[745,928],[775,928],[810,920],[850,905],[870,910],[990,910],[1015,902],[1060,901],[1090,907],[1130,902],[1155,902],[1175,921],[1187,923]]
    .map((p) => [X(p[0]), Y(p[1])]);
  [431, 445].forEach((y) => {
    s += line(rsiPane.x1, y + 0.5, rsiPane.x2, y + 0.5, 'stroke="#dde8ee" stroke-dasharray="3 3"');
  });
  s += poly(rsi, "#2196f3", 1.3);
  s += frame(rsiPane.x1, rsiPane.y1, rsiPane.x2, rsiPane.y2);
  s += text(1433, 432, "RSI (20, Close)", "info");
  s += text(2509, 431, "100") + text(2509, 436, "70") + text(2509, 456, "0");
  s += `<rect x="2507" y="435" width="40" height="13" fill="#1e90ff"/>` + text(2508, 446, "37.1110", "info");

  s += frame(plot.x1, plot.y1, plot.x2, plot.y2);
  s += text(1435, 191, "USDJPY、H1、セル: 170、スケール: 92 %", "info");
  const ticks = { x1: plot.x1, y1: plot.y1, x2: plot.x2, y2: rsiPane.y2 };
  s += axis(ticks, ys, ["104.550", "104.380", "104.210", "104.040", "103.870", "103.700", "103.530", "103.360"], 1434,
    ["8 1 2021", "8 1 15:00", "10 1 23:00", "11 1 07:00", "11 1 15:00", "11 1 23:00", "12 1 07:00", "12 1 15:00", "12 1 23:00", "13 1 07:00", "13 1 15:00", "13 1 23:00", "14 1 07:00", "14 1 15:00"], 470);
  s += priceTag(2507, 357, "103.644", 41);
  svg.innerHTML = s;
}

function drawM5() {
  const svg = setupSvg("chartM5");
  const plot = { x1: 292, y1: 522, x2: 1363, y2: 800 };
  const X = (x) => 270 + x / 1.3635;
  const Y = (y) => 490 + y / 3;
  const ys = [548, 580, 613, 645, 677, 710, 742, 774];
  const cfg = { start: 294, pitch: 8, oy: 490, seed: 5, auto: 14, bottom: 800, vmin: 6, vmax: 16, spike: [45, 60, 4] };
  const list = parseCandles(M5);

  let s = grid(plot, ys, 294, "#dde8ee", "4 3");
  s += line(plot.x1, 739.5, plot.x2, 739.5, 'stroke="#cfcfcf"');
  s += volumes(list.length, cfg);
  s += candles(list, cfg);
  s += line(912.5, plot.y1, 912.5, plot.y2, 'stroke="#444" stroke-width="0.8"');

  s += poly([[X(492), Y(407)], [X(557), Y(340)]], "#26a69a");
  s += poly([[X(689), Y(348)], [X(754), Y(408)]], "#ef5350");
  s += poly([[X(875), Y(390)], [X(1148), Y(660)]], "#138a7e", 1.2);
  [[492, 407, "#26a69a"], [557, 338, "#ef5350"], [689, 348, "#26a69a"], [754, 408, "#ef5350"], [875, 390, "#ef5350"], [1148, 660, "#26a69a"]].forEach((c) => {
    s += `<circle cx="${X(c[0])}" cy="${Y(c[1])}" r="4.500" fill="none" stroke="${c[2]}"/>`;
  });
  s += text(X(499), Y(452), "Buy", "buy") + text(X(565), Y(322), "Sell", "sell") + text(X(696), Y(392), "Buy", "buy");
  s += text(X(760), Y(386), "Sell", "sell") + text(X(882), Y(368), "Sell", "sell") + text(X(1153), Y(708), "Buy", "buy");

  [[503, "eu", "#00a88e"], [633, "usa", "#00a88e", "2"], [765, "uk", "#00a88e"], [895, "usa", "#00a88e"], [1157, "usa", "#c62828"]].forEach((f) => {
    s += flag(X(f[0]), 785, f[1], f[2], f[3]);
  });
  s += noteMark([888, 556, 48, 53], [901, 570, 22, 30]);
  s += noteMark([1088, 668, 49, 53], [1101, 681, 21, 31]);

  s += frame(plot.x1, plot.y1, plot.x2, plot.y2);
  s += text(295, 535, "USDJPY、M5、セル: 105、スケール: 73 %", "info");
  s += axis(plot, ys.filter((y) => y !== 742), ["104.265", "104.160", "104.055", "103.950", "103.845", "103.740", "103.530"], 294,
    ["14 1 2021", "14 1 09:35", "14 1 10:15", "14 1 10:55", "14 1 11:35", "14 1 12:15", "14 1 12:55", "14 1 13:35", "14 1 14:15", null, "14 1 15:35", "14 1 16:15", "14 1 16:55", "14 1 17:35"], 815);
  s += priceTag(1368, 739, "103.644", 41);
  s += `<rect x="868" y="805" width="86" height="13" fill="#2b2b2b"/>` + text(870, 815, "2021.01.14 15:20", "tag");
  svg.innerHTML = s;
}

function drawEquity() {
  const svg = setupSvg("chartEquity");
  svg.classList.add("on-black");
  const plot = { x1: 1431, y1: 522, x2: 2502, y2: 800 };
  const X = (x) => 1420 + x / 1.375;
  const Y = (y) => 490 + y / 3;
  const ys = [546, 591, 636, 681, 726, 771];
  const pts = (list) => list.map((p) => [X(p[0]), Y(p[1])]);

  let s = grid(plot, ys, 1433, "#2c2c6e", "3 2");
  s += line(X(232), plot.y1, X(232), plot.y2, 'stroke="#4a4ab0" stroke-dasharray="4 2"');
  s += poly(pts([[18, 844], [1045, 844], [1052, 828], [1060, 844], [1085, 844], [1097, 814], [1123, 814], [1130, 844], [1165, 844]]), "#8a1010", 1.2);
  s += poly(pts([[1123, 842], [1165, 842]]), "#888", 1.5);
  s += poly(pts([[1097, 289], [1163, 289], [1170, 205]]), "#9400d3", 1.3);
  s += poly(pts([[18, 304], [1052, 304]]), "#00e000", 1, 'stroke-dasharray="3 1"');
  s += poly(pts([[1052, 304], [1056, 310], [1058, 283], [1062, 283], [1064, 259], [1088, 259], [1090, 265], [1096, 265], [1097, 289], [1130, 289], [1131, 246], [1135, 240], [1140, 242], [1145, 195], [1152, 205], [1162, 187], [1168, 208]]), "#00e000", 1.2);
  s += poly(pts([[1168, 208], [1192, 208]]), "#00e000", 1, 'stroke-dasharray="3 1"');

  [[25, "usa", "#00a88e", "3"], [232, "globe", "#00a88e", "12"], [386, "eu", "#00a88e"], [430, "eu", "#f9a825", "3"], [529, "usa", "#f9a825", "2"], [573, "usa", "#00a88e"],
   [760, "globe", "#00a88e", "2"], [1057, "globe", "#00a88e", "3"], [1101, "globe", "#00a88e", "2"], [1178, "usa", "#c62828"]].forEach((f) => {
    s += flag(X(f[0]), 785, f[1], f[2], f[3]);
  });

  // legend
  [[1435, "#9400d3", "残高"], [1482, "#00ff00", "有効証拠金"], [1565, "#808080", "証拠金"], [1625, "#800000", "ドローダウン"]].forEach((l) => {
    s += `<rect x="${l[0]}" y="528" width="9" height="9" fill="${l[1]}" stroke="#fff" stroke-width="1"/>`;
    s += text(l[0] + 13, 537, l[2], "info");
  });

  s += frame(plot.x1, plot.y1, plot.x2, plot.y2, "#fff");
  s += axis(plot, ys, ["12500", "10000", "7500", "5000", "2500", "0"], 1433,
    ["12 1 2021", "12 1 18:15", "12 1 22:15", "13 1 02:15", "13 1 06:15", "13 1 10:15", "13 1 14:15", "13 1 18:15", "13 1 22:15", "14 1 02:15", "14 1 06:15", "14 1 10:15", "14 1 13:15", "14 1 17:00"], 815, "white");
  svg.innerHTML = s;
}

drawDaily();
drawH1();
drawM5();
drawEquity();
```
